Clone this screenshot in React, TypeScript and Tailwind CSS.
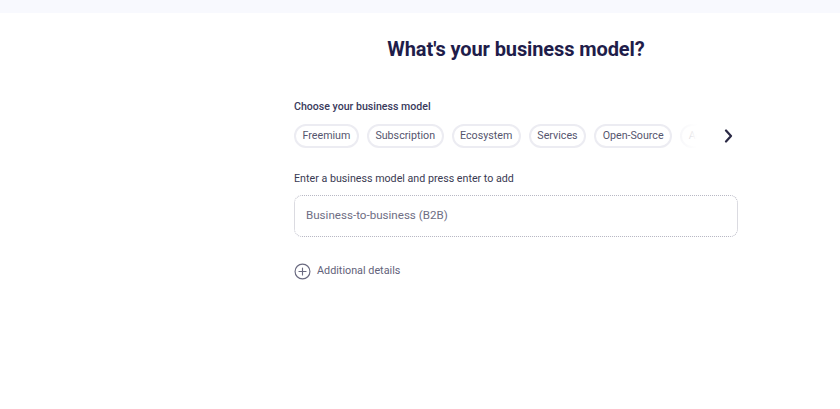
import React from "react";

const chips = ["Freemium", "Subscription", "Ecosystem", "Services", "Open-Source", "Advertising"];

export default function App() {
  return (
    <div className="w-[840px] h-[409px] bg-white overflow-hidden" style={{ fontFamily: "Roboto, 'Noto Sans', sans-serif" }}>
      <div className="h-[13px] bg-[#f8f9fe]" />
      <div className="flex">
        <div className="w-[192px] shrink-0" />
        <div className="flex-1 flex justify-center">
          <div className="w-[444px] flex flex-col">
            <h1 className="mt-[22px] text-center text-[20px] leading-[28px] font-bold tracking-[-0.1px] text-[#1f1d4a]">
              What's your business model?
            </h1>
            <div className="mt-[37px] text-[10.6px] leading-[14px] font-medium text-[#3a3a5c]">
              Choose your business model
            </div>
            <div className="mt-[10px] flex items-center">
              <div className="relative w-[414px] overflow-hidden">
                <div className="flex gap-[8px]">
                  {chips.map((c) => (
                    <span
                      key={c}
                      className="shrink-0 h-[24px] px-[6.5px] flex items-center rounded-full border-2 border-[#ececf2] text-[10.7px] text-[#55556e]"
                    >
                      {c}
                    </span>
                  ))}
                </div>
                <div className="absolute right-0 top-0 h-full w-[28px] bg-gradient-to-r from-white/60 to-white to-60%" />
              </div>
              <div className="ml-[16px] flex items-center">
                <svg width="9" height="14" viewBox="0 0 9 14" fill="none" stroke="#2b2a45" strokeWidth="2.2" strokeLinecap="round" strokeLinejoin="round">
                  <path d="M2 1.5l5 5.5-5 5.5" />
                </svg>
              </div>
            </div>
            <div className="mt-[23px] text-[10.7px] leading-[16px] text-[#3a3a52]">
              Enter a business model and press enter to add
            </div>
            <div className="mt-[8px] h-[42px] rounded-[8px] border border-dotted border-[#b8b8c4] flex items-center px-[11px] text-[11.6px] text-[#6e6e84]">
              Business-to-business (B2B)
            </div>
            <div className="mt-[26px] flex items-center gap-[6px]">
              <svg width="17" height="17" viewBox="0 0 24 24" fill="none" stroke="#6a6a80" strokeWidth="1.6" strokeLinecap="round">
                <circle cx="12" cy="12" r="10.5" />
                <path d="M12 7v10M7 12h10" />
              </svg>
              <span className="text-[10.8px] text-[#62627a]">Additional details</span>
            </div>
          </div>
        </div>
      </div>
    </div>
  );
}
